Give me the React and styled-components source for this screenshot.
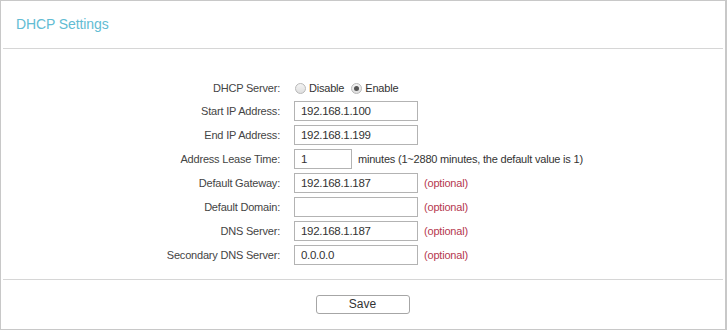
import React from "react";
import styled, { createGlobalStyle } from "styled-components";

const Global = createGlobalStyle`
  body {
    margin: 0;
    background: #fff;
    font-family: "Liberation Sans", Arial, sans-serif;
  }
`;

const Panel = styled.div`
  box-sizing: border-box;
  width: 727px;
  height: 330px;
  border: 1px solid #c8c8c8;
  border-right-width: 2px;
  display: flex;
  flex-direction: column;
`;

const Header = styled.div`
  height: 46px;
  display: flex;
  align-items: center;
  padding-left: 15px;
  padding-bottom: 1px;
  font-size: 14px;
  letter-spacing: -0.1px;
  color: #62bcd3;
`;

const Divider = styled.div`
  height: 1px;
  margin: 0 2px;
  background: #d6d6d6;
`;

const Form = styled.div`
  display: grid;
  grid-template-columns: 279px 1fr;
  column-gap: 14px;
  padding-top: 28px;
  padding-bottom: 12px;
  font-size: 11px;
  letter-spacing: -0.2px;
  color: #333;
`;

const Label = styled.div`
  height: ${(p) => (p.$short ? 22 : 24)}px;
  display: flex;
  align-items: center;
  justify-content: flex-end;
  color: #444;
`;

const Value = styled.div`
  height: ${(p) => (p.$short ? 22 : 24)}px;
  display: flex;
  align-items: center;
  gap: 6px;
`;

const Input = styled.input`
  box-sizing: border-box;
  width: ${(p) => p.$width || 124}px;
  height: 20px;
  border: 1px solid #b3b3b3;
  padding: 0 6px;
  font-family: inherit;
  font-size: 11.5px;
  letter-spacing: -0.3px;
  color: #333;
  outline: none;
`;

const Optional = styled.span`
  color: #b5384f;
`;

const RadioGroup = styled.div`
  display: flex;
  align-items: center;
  gap: 3px;
  margin-left: 1px;
`;

const Radio = styled.span`
  box-sizing: border-box;
  width: 11px;
  height: 11px;
  border-radius: 50%;
  border: 1px solid #b8b8b8;
  background: linear-gradient(#f4f4f4, #dedede);
  display: inline-flex;
  align-items: center;
  justify-content: center;
  &::after {
    content: "";
    width: 5px;
    height: 5px;
    border-radius: 50%;
    background: ${(p) => (p.$checked ? "#555" : "transparent")};
  }
`;

const RadioText = styled.span`
  margin-right: 4px;
`;

const Footer = styled.div`
  flex: 1;
  display: flex;
  align-items: center;
  justify-content: center;
  padding-bottom: 1px;
`;

const Button = styled.button`
  box-sizing: border-box;
  width: 94px;
  height: 19px;
  margin-left: -1px;
  border: 1px solid #a6a6a6;
  border-radius: 3px;
  background: #fff;
  font-family: inherit;
  font-size: 12px;
  color: #333;
  padding: 0;
`;

const rows = [
  { label: "Start IP Address:", value: "192.168.1.100" },
  { label: "End IP Address:", value: "192.168.1.199" },
  { label: "Address Lease Time:", value: "1", width: 58, note: "minutes (1~2880 minutes, the default value is 1)" },
  { label: "Default Gateway:", value: "192.168.1.187", optional: true },
  { label: "Default Domain:", value: "", optional: true },
  { label: "DNS Server:", value: "192.168.1.187", optional: true },
  { label: "Secondary DNS Server:", value: "0.0.0.0", optional: true },
];

export default function App() {
  return (
    <>
      <Global />
      <Panel>
        <Header>DHCP Settings</Header>
        <Divider />
        <Form>
          <Label $short>DHCP Server:</Label>
          <Value $short>
            <RadioGroup>
              <Radio />
              <RadioText>Disable</RadioText>
              <Radio $checked />
              <RadioText>Enable</RadioText>
            </RadioGroup>
          </Value>
          {rows.map((r) => (
            <React.Fragment key={r.label}>
              <Label>{r.label}</Label>
              <Value>
                <Input $width={r.width} defaultValue={r.value} />
                {r.note && <span>{r.note}</span>}
                {r.optional && <Optional>(optional)</Optional>}
              </Value>
            </React.Fragment>
          ))}
        </Form>
        <Divider />
        <Footer>
          <Button>Save</Button>
        </Footer>
      </Panel>
    </>
  );
}
